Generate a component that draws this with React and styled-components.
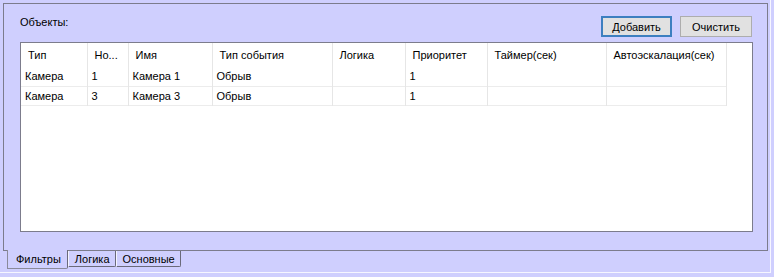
import React from "react";
import styled, { createGlobalStyle, css } from "styled-components";

const LAV = "#cfcffe";

const GlobalStyle = createGlobalStyle`
  html, body { margin: 0; padding: 0; background: ${LAV}; }
  body { font-family: "Liberation Sans", Arial, sans-serif; font-size: 11px; color: #000; }
`;

const TabControl = styled.div`
  width: 771px;
  height: 273px;
  box-sizing: border-box;
  background: ${LAV};
  border-right: 1px solid #f6f6ff;
  border-bottom: 1px solid #f6f6ff;
  padding: 3px 2px 0 3px;
  display: flex;
  flex-direction: column;
`;

const Panel = styled.div`
  height: 248px;
  box-sizing: border-box;
  border: 1px solid #7c7c8c;
  padding: 12px 14px 0 16px;
  display: flex;
  flex-direction: column;
  gap: 5px;
`;

const Toolbar = styled.div`
  display: flex;
  align-items: flex-start;
  height: 21px;
`;

const Label = styled.span`
  line-height: 13px;
  flex: 1;
`;

const Buttons = styled.div`
  display: flex;
  gap: 8px;
  align-items: center;
  padding-right: 1px;
`;

const Button = styled.button`
  font: inherit;
  color: #000;
  height: 21px;
  width: ${(p) => p.$w}px;
  padding: 0;
  background: #e1e1e1;
  box-sizing: border-box;
  border: 1px solid #adadad;
  ${(p) =>
    p.$focused &&
    css`
      border: 2px solid #3d7fc0;
    `}
`;

const TableBox = styled.div`
  height: 190px;
  box-sizing: border-box;
  border: 1px solid #7c7c8c;
  background: #fff;
  overflow: hidden;
`;

const Table = styled.table`
  border-collapse: collapse;
  table-layout: fixed;
  width: 705px;
`;

const HeadCell = styled.th`
  height: 24px;
  padding: 0 0 0 7px;
  text-align: left;
  font-weight: normal;
  border-right: 1px solid #e6e6e6;
  white-space: nowrap;
  overflow: hidden;
  box-sizing: border-box;
`;

const Row = styled.tr`
  border-bottom: 1px solid #ececec;
`;

const Cell = styled.td`
  height: 19px;
  padding: 0 0 0 4px;
  border-right: 1px solid #e6e6e6;
  white-space: nowrap;
  overflow: hidden;
  box-sizing: border-box;
`;

const TabStrip = styled.div`
  display: flex;
  align-items: flex-start;
  padding-left: 4px;
`;

const Tab = styled.div`
  box-sizing: border-box;
  line-height: 13px;
  ${(p) =>
    p.$active
      ? css`
          margin-top: -1px;
          height: 19px;
          padding: 3px 6px 0 8px;
          border-left: 1px solid #8a8a9a;
          border-bottom: 1px solid #8a8a9a;
          border-right: 1px solid #6a6a7a;
          border-bottom-right-radius: 2px;
          background: ${LAV};
        `
      : css`
          height: 16px;
          padding: 2px 5px 0 6px;
          border-left: 1px solid #f4f4ff;
          border-bottom: 1px solid #6a6a7a;
          border-right: 1px solid #6a6a7a;
          border-bottom-right-radius: 2px;
        `}
`;

const columns = [
  { t: "Тип", w: 66 },
  { t: "Но...", w: 41 },
  { t: "Имя", w: 84 },
  { t: "Тип события", w: 120 },
  { t: "Логика", w: 73 },
  { t: "Приоритет", w: 82 },
  { t: "Таймер(сек)", w: 119 },
  { t: "Автоэскалация(сек)", w: 120 },
];

const rows = [
  ["Камера", "1", "Камера 1", "Обрыв", "", "1", "", ""],
  ["Камера", "3", "Камера 3", "Обрыв", "", "1", "", ""],
];

export default function App() {
  return (
    <>
      <GlobalStyle />
      <TabControl>
        <Panel>
          <Toolbar>
            <Label>Объекты:</Label>
            <Buttons>
              <Button $focused $w={71}>Добавить</Button>
              <Button $w={72}>Очистить</Button>
            </Buttons>
          </Toolbar>
          <TableBox>
            <Table>
              <colgroup>
                {columns.map((c) => (
                  <col key={c.t} style={{ width: c.w }} />
                ))}
              </colgroup>
              <thead>
                <tr>
                  {columns.map((c) => (
                    <HeadCell key={c.t}>{c.t}</HeadCell>
                  ))}
                </tr>
              </thead>
              <tbody>
                {rows.map((r, i) => (
                  <Row key={i}>
                    {r.map((v, j) => (
                      <Cell key={j}>{v}</Cell>
                    ))}
                  </Row>
                ))}
              </tbody>
            </Table>
          </TableBox>
        </Panel>
        <TabStrip>
          <Tab $active>Фильтры</Tab>
          <Tab>Логика</Tab>
          <Tab>Основные</Tab>
        </TabStrip>
      </TabControl>
    </>
  );
}
